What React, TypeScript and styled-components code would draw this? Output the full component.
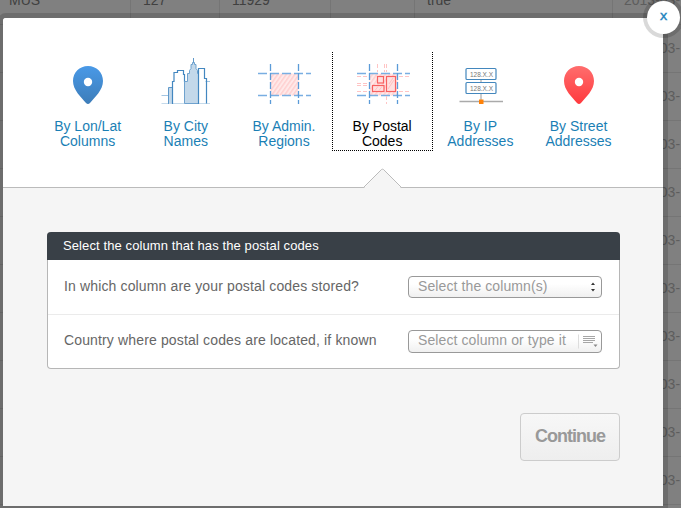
import React from 'react';
import styled, { createGlobalStyle, css } from 'styled-components';

const GlobalStyle = createGlobalStyle`
  * { box-sizing: border-box; }
  html, body { margin: 0; height: 100%; overflow: hidden; }
  body { font-family: "Liberation Sans", Arial, Helvetica, sans-serif; background: #808080; }
`;

const Screen = styled.div`
  position: relative;
  width: 681px;
  height: 508px;
  overflow: hidden;
  background: #808080;
`;

const Table = styled.div`
  margin-top: -23px;
`;

const TableRow = styled.div`
  display: grid;
  grid-template-columns: 131px 89px 111px 84px 198px 120px;
  height: 48px;
  border-bottom: 1px solid #757575;
`;

const Cell = styled.div`
  padding: 15px 0 0 ${(p: { $first?: boolean }) => (p.$first ? '9px' : '12px')};
  border-right: 1px solid #757575;
  font-size: 14px;
  line-height: 16px;
  color: #404040;
  white-space: nowrap;
  &:last-child { color: #5d5d5d; padding-left: 11px; }
`;

const Dialog = styled.section`
  position: absolute;
  left: 3px;
  top: 18px;
  width: 660px;
  height: 488px;
  border-radius: 3px 3px 0 0;
  background: #f5f5f5;
  box-shadow: 0 0 0 5px rgba(0, 0, 0, 0.15);
`;

const CloseButton = styled.button`
  position: absolute;
  right: -17px;
  top: -17px;
  width: 33px;
  height: 33px;
  padding: 0 0 3px;
  border: 0;
  border-radius: 50%;
  background: #fff;
  box-shadow: 0 0 0 4px rgba(0, 0, 0, 0.15);
  color: #1b82bd;
  font: 13px/30px "DejaVu Sans", sans-serif;
  -webkit-text-stroke: 0.4px #1b82bd;
`;

const Tabs = styled.nav`
  display: grid;
  grid-template-columns: repeat(6, 98.2px);
  height: 170px;
  padding: 34px 0 0 36px;
  background: #fff;
  border-bottom: 1px solid #bbb;
  border-radius: 3px 3px 0 0;
  position: relative;
`;

const Tab = styled.a<{ $active?: boolean }>`
  position: relative;
  display: flex;
  flex-direction: column;
  align-items: center;
  height: 99px;
  color: ${(p) => (p.$active ? '#000' : '#1b7fb5')};
  font-size: 14px;
  line-height: 15px;
  text-align: center;
  white-space: pre-line;
  ${(p) =>
    p.$active &&
    css`
      &::after {
        content: '';
        position: absolute;
        inset: 0 -1px 0 -2px;
        border: 1px dotted #000;
        border-top: 0;
      }
    `}
  svg { display: block; margin-bottom: 15px; }
`;

const TabLabel = styled.span`
  margin-right: 1px;
`;

const Pointer = styled.svg`
  position: absolute;
  left: 360px;
  top: 150px;
`;

const Panel = styled.div`
  width: 573px;
  height: 137px;
  margin: 44px 0 0 44px;
  border: 1px solid #b6b6b6;
  border-top: 0;
  border-radius: 4px;
  background: #fff;
`;

const PanelTitle = styled.h3`
  height: 28px;
  margin: 0 -1px;
  padding: 0 16px;
  border-radius: 4px 4px 0 0;
  background: #394047;
  color: #fff;
  font-size: 13px;
  font-weight: normal;
  line-height: 27px;
  letter-spacing: 0.1px;
`;

const Field = styled.div`
  display: flex;
  align-items: center;
  justify-content: space-between;
  height: 54px;
  padding: 0 17px 0 16px;
  color: #666;
  font-size: 14px;
  & + & { height: 55px; padding-bottom: 2px; border-top: 1px solid #ebebeb; }
`;

const FieldLabel = styled.span`
  padding-bottom: 2px;
  letter-spacing: 0.14px;
`;

const SelectBox = styled.div<{ $tall?: boolean }>`
  display: flex;
  align-items: center;
  justify-content: space-between;
  width: 194px;
  height: ${(p) => (p.$tall ? 23 : 22)}px;
  padding: 0 ${(p) => (p.$tall ? 3 : 5)}px 0 9px;
  border: 1px solid #999;
  border-radius: 4px;
  background: linear-gradient(#fff 35%, #f0f0f0);
  color: #999;
  line-height: 16px;
  span { margin-top: -3px; letter-spacing: 0.1px; }
`;

const Continue = styled.button`
  display: block;
  width: 100px;
  height: 48px;
  margin: 44px 0 0 517px;
  padding: 0 0 1px;
  border: 1px solid #ccc;
  border-radius: 4px;
  background: linear-gradient(#f7f7f7, #eee);
  color: #999;
  font: bold 18px "Liberation Sans", Arial, sans-serif;
  letter-spacing: -1px;
`;

function Pin({ top, bottom, id }: { top: string; bottom: string; id: string }) {
  return (
    <svg width="60" height="52" viewBox="0 0 60 52">
      <defs>
        <linearGradient id={id} x1="0" y1="0" x2="0" y2="1">
          <stop offset="0" stopColor={top} />
          <stop offset="1" stopColor={bottom} />
        </linearGradient>
      </defs>
      <path d="M30 14C21.500 14 15 20.500 15 29C15 38 23 45 28 51Q30 53 32 51C37 45 45 38 45 29C45 20.500 38.500 14 30 14Z" fill={`url(#${id})`} />
      <circle cx="30" cy="30" r="4.200" fill="#fff" />
    </svg>
  );
}

function City() {
  return (
    <svg width="60" height="52" viewBox="0 0 60 52" fill="none" stroke="#5f98c9" strokeWidth="1">
      <path d="M5.500 43.500H12M49.500 29.500H54" stroke="#a3c5e2" />
      <path d="M5.500 51.500H54" stroke="#c5daeb" />
      <path d="M12.500 52V35.500H16.500V52" fill="#c3d8ea" />
      <path d="M16.500 52V29.500H18V20.500H21.500V18.500H27.500V22.500H28.500V30" stroke="#4387c0" strokeWidth="1.200" />
      <path d="M28.500 51.500V29.500H31.500V21.500H33.500V18.500L35 16.500V12.500H36.500V10.500H38.500V12.500H40V16.500L41.500 18.500V21.500H42.500V51.500Z" fill="#c3d8ea" stroke="#6fa2ce" />
      <path d="M37.500 10.500V6" />
      <path d="M42.500 52V16.500H48.500V26.500H50.500V51.500" stroke="#4387c0" strokeWidth="1.200" />
    </svg>
  );
}

function Region({ postal }: { postal?: boolean }) {
  const id = postal ? 'hatchPostal' : 'hatchAdmin';
  return (
    <svg width="60" height="52" viewBox="0 0 60 52" fill="none">
      <defs>
        <pattern id={id} width="3.500" height="3.500" patternUnits="userSpaceOnUse" patternTransform="rotate(35)">
          <rect width="3.500" height="3.500" fill="#ffe9e9" />
          <rect width="1.500" height="3.500" fill="#ffd0d0" />
        </pattern>
      </defs>
      <rect x="16.500" y="21.500" width="28" height="22" fill={`url(#${id})`} />
      <path d="M4 21.500H57M4 43.500H57" stroke="#79aee2" strokeWidth="1.300" strokeDasharray="9 3" />
      <path d="M16.500 12V52M44.500 12V52" stroke="#5b9bd8" strokeWidth="1.300" strokeDasharray="7 2" />
      {postal && (
        <>
          <path d="M24.500 12V20M31.500 12V20M33.500 12V20M33.500 44V52M4 24.500H16M4 31.500H16M4 33.500H16M4 39.500H16M46 24.500H57M46 39.500H57" stroke="#ffc4c4" strokeDasharray="4 2" />
          <g fill="#ffe0e0" stroke="#f86060" strokeWidth="1.200">
            <rect x="24.500" y="24.500" width="6" height="6.500" />
            <rect x="19.500" y="33.500" width="11.500" height="6" />
            <rect x="33.500" y="24.500" width="9" height="15" />
          </g>
          <path d="M22 38.500L25 34.500M26 38.500L29 34.500M35 37L41 28M36 32L40 26" stroke="#ffc0c0" />
        </>
      )}
    </svg>
  );
}

function Network() {
  return (
    <svg width="60" height="52" viewBox="0 0 60 52" fill="none">
      <path d="M30 27V48" stroke="#999" />
      <path d="M8.500 49.500H52" stroke="#aaa" strokeWidth="1.300" />
      <g fill="#fff" stroke="#4387bd" strokeWidth="1.200">
        <rect x="15" y="16.500" width="30" height="11" rx="1" />
        <rect x="15" y="30.500" width="30" height="11" rx="1" />
      </g>
      <g fill="#777" fontSize="6.500" fontFamily="Liberation Sans, sans-serif">
        <text x="19" y="24.500" textLength="23">128.X.X</text>
        <text x="19" y="38.500" textLength="23">128.X.X</text>
      </g>
      <rect x="28" y="47.500" width="4.500" height="4.500" fill="#ff8208" />
    </svg>
  );
}

const tabs = [
  { label: 'By Lon/Lat\nColumns', icon: <Pin id="pinBlue" top="#4999e7" bottom="#3d7db9" /> },
  { label: 'By City\nNames', icon: <City /> },
  { label: 'By Admin.\nRegions', icon: <Region /> },
  { label: 'By Postal\nCodes', icon: <Region postal />, active: true },
  { label: 'By IP\nAddresses', icon: <Network /> },
  { label: 'By Street\nAddresses', icon: <Pin id="pinRed" top="#ff6d6d" bottom="#ff3a3e" /> },
];

const rows = [
  ['MUS', '127', '11929', '', 'true', '2013-03-'],
  ...Array.from({ length: 10 }, () => ['', '', '', '', '', '2013-03-']),
];

export default function App() {
  return (
    <>
      <GlobalStyle />
      <Screen>
        <Table>
          {rows.map((row, i) => (
            <TableRow key={i}>
              {row.map((text, j) => (
                <Cell key={j} $first={j === 0}>{text}</Cell>
              ))}
            </TableRow>
          ))}
        </Table>
        <Dialog>
          <Tabs>
            {tabs.map((tab) => (
              <Tab key={tab.label} $active={tab.active}>
                {tab.icon}
                <TabLabel>{tab.label}</TabLabel>
              </Tab>
            ))}
            <Pointer width="40" height="21" viewBox="0 0 40 21">
              <path d="M0.500 20.500L18.500 1.800Q19.500 0.800 20.500 1.800L38.500 20.500V21H0.500Z" fill="#f5f5f5" />
              <path d="M0.500 19.500L18.500 1.500Q19.500 0.800 20.500 1.500L38.500 19.500" fill="none" stroke="#bbb" />
            </Pointer>
          </Tabs>
          <Panel>
            <PanelTitle>Select the column that has the postal codes</PanelTitle>
            <Field>
              <FieldLabel>In which column are your postal codes stored?</FieldLabel>
              <SelectBox>
                <span>Select the column(s)</span>
                <svg width="6" height="10" viewBox="0 0 6 10" fill="#333">
                  <path d="M1 3L3 0.500L5 3ZM1 7L3 9.500L5 7Z" />
                </svg>
              </SelectBox>
            </Field>
            <Field>
              <FieldLabel>Country where postal codes are located, if known</FieldLabel>
              <SelectBox $tall>
                <span>Select column or type it</span>
                <svg width="21" height="15" viewBox="0 0 21 15">
                  <path d="M1.500 0.500V14.500" stroke="#ddd" />
                  <path d="M6 2.500H18M6 4.500H18M6 6.500H18M6 8.500H16" stroke="#a6a6a6" strokeWidth="1.200" />
                  <path d="M16.500 10.500H20.500L18.500 13Z" fill="#888" />
                </svg>
              </SelectBox>
            </Field>
          </Panel>
          <Continue>Continue</Continue>
          <CloseButton>x</CloseButton>
        </Dialog>
      </Screen>
    </>
  );
}
